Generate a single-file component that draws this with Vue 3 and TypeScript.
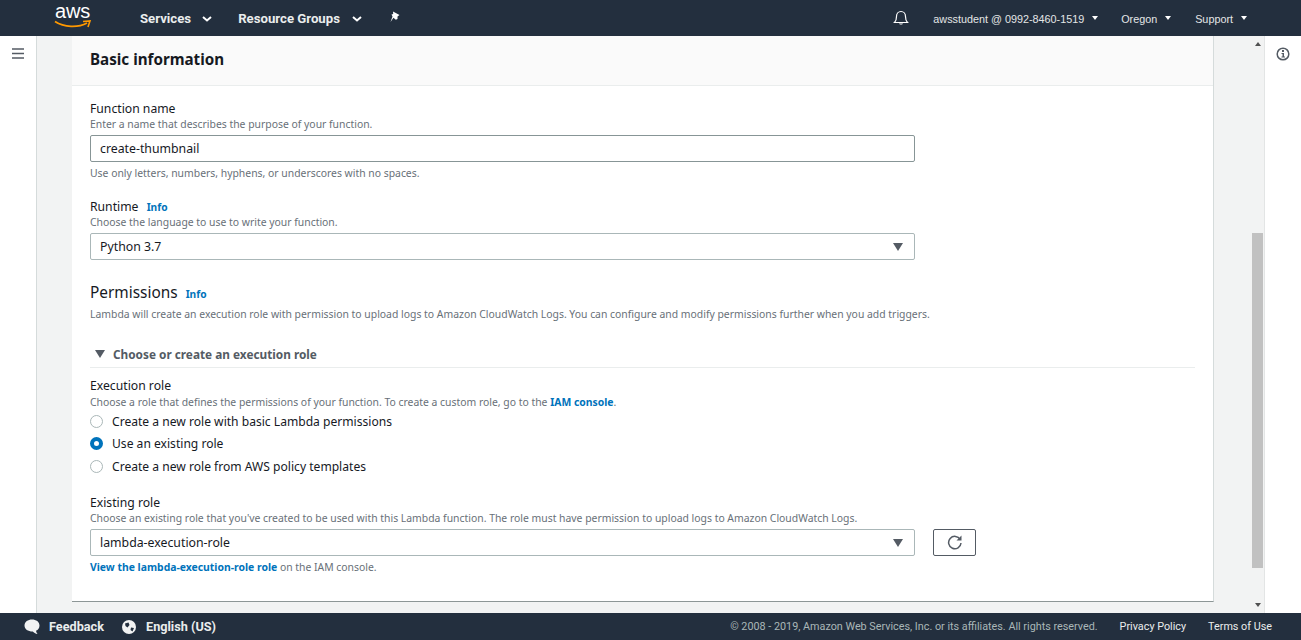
<script setup lang="ts">
const radios = [
  { label: 'Create a new role with basic Lambda permissions', on: false },
  { label: 'Use an existing role', on: true },
  { label: 'Create a new role from AWS policy templates', on: false },
]
</script>

<template>
  <div class="page">
    <header class="top">
      <div class="logo">
        <span class="aws">aws</span>
        <svg class="smile" width="38" height="9" viewBox="0 0 38 9"><path d="M1 1.500C10 7.500 24 8 33 3" fill="none" stroke="#f90" stroke-width="1.800"/><path d="M29 1.500L36 1L34 7" fill="none" stroke="#f90" stroke-width="1.600"/></svg>
      </div>
      <span class="nav n1">Services</span>
      <svg class="chev c1" width="10" height="6" viewBox="0 0 10 6"><path d="M1 1l4 3.500L9 1" fill="none" stroke="#fff" stroke-width="2"/></svg>
      <span class="nav n2">Resource Groups</span>
      <svg class="chev c2" width="10" height="6" viewBox="0 0 10 6"><path d="M1 1l4 3.500L9 1" fill="none" stroke="#fff" stroke-width="2"/></svg>
      <svg class="pin" width="12" height="12" viewBox="0 0 12 12"><path d="M4 .5L10.500 4 8.500 5.500 8.500 8 6.800 8.800 4.500 6.800 1.500 11 3.500 5.500 2.500 3.500 4.200 3Z" fill="#fff"/></svg>
      <div class="spacer"></div>
      <svg class="bell" width="16" height="16" viewBox="0 0 16 16"><path d="M1.500 12.500C3.200 11 3.500 9.500 3.500 6.500 3.500 3.500 5.500 1.500 8 1.500s4.500 2 4.500 5c0 3 .3 4.500 2 6Z" fill="none" stroke="#fff" stroke-width="1.200"/><path d="M6 13.500c.3 1.300 3.700 1.300 4 0Z" fill="#fff"/></svg>
      <span class="rt r1">awsstudent @ 0992-8460-1519</span><i class="tri"></i>
      <span class="rt r2">Oregon</span><i class="tri"></i>
      <span class="rt r3">Support</span><i class="tri"></i>
    </header>

    <div class="middle">
      <aside class="left">
        <svg width="12" height="11" viewBox="0 0 12 11"><path d="M0 1h12M0 5.500h12M0 10h12" stroke="#545b64" stroke-width="1.400"/></svg>
      </aside>

      <main class="main">
        <section class="card">
          <div class="card-head"><h2>Basic information</h2></div>
          <div class="card-body">
            <div class="label">Function name</div>
            <div class="hint">Enter a name that describes the purpose of your function.</div>
            <div class="input active">create-thumbnail</div>
            <div class="hint after">Use only letters, numbers, hyphens, or underscores with no spaces.</div>

            <div class="label runtime">Runtime <a class="info">Info</a></div>
            <div class="hint">Choose the language to use to write your function.</div>
            <div class="input select">Python 3.7<i class="sel-tri"></i></div>

            <h3 class="perm">Permissions <a class="info">Info</a></h3>
            <div class="hint perm-text">Lambda will create an execution role with permission to upload logs to Amazon CloudWatch Logs. You can configure and modify permissions further when you add triggers.</div>

            <div class="expander"><i class="exp-tri"></i>Choose or create an execution role</div>

            <div class="label exec">Execution role</div>
            <div class="hint">Choose a role that defines the permissions of your function. To create a custom role, go to the <a class="info link">IAM console</a>.</div>
            <div class="radios">
              <div v-for="r in radios" :key="r.label" class="radio-row">
                <span class="radio" :class="{ on: r.on }"></span>{{ r.label }}
              </div>
            </div>

            <div class="label existing">Existing role</div>
            <div class="hint">Choose an existing role that you've created to be used with this Lambda function. The role must have permission to upload logs to Amazon CloudWatch Logs.</div>
            <div class="role-row">
              <div class="input select">lambda-execution-role<i class="sel-tri"></i></div>
              <button class="refresh">
                <svg width="16" height="16" viewBox="0 0 16 16"><path d="M13.200 5.500A6.200 6.200 0 1 0 14 9" fill="none" stroke="#545b64" stroke-width="1.500"/><path d="M14.500 1.500v5h-5Z" fill="#545b64"/></svg>
              </button>
            </div>
            <div class="hint view"><a class="info link">View the lambda-execution-role role</a> on the IAM console.</div>
          </div>
        </section>
      </main>

      <div class="scroll">
        <i class="up"></i>
        <div class="track"><div class="thumb"></div></div>
        <i class="down"></i>
      </div>

      <aside class="right">
        <svg width="14" height="14" viewBox="0 0 14 14"><circle cx="7" cy="7" r="5.800" fill="none" stroke="#545b64" stroke-width="1.500"/><rect x="6" y="3" width="2" height="2" fill="#545b64"/><path d="M5.500 6H8v3.500h1v1H5.500v-1h1V7h-1Z" fill="#545b64"/></svg>
      </aside>
    </div>

    <footer class="foot">
      <svg class="fb" width="16" height="16" viewBox="0 0 16 16"><path d="M8 .5c4 0 7.500 2.300 7.500 6 0 2.500-1.300 4.500-3.500 5.300.2 1.200.7 2.200 1.500 3.200-2-.3-3.700-1.300-4.800-2.500C4 12.500.5 10.200.5 6.500.5 2.800 4 .5 8 .5Z" fill="#f2f3f3"/></svg>
      <span class="f-item feedback">Feedback</span>
      <svg class="globe" width="14" height="14" viewBox="0 0 14 14"><circle cx="7" cy="7" r="7" fill="#f2f3f3"/><path d="M3 3.500 6.500 2.500 7.500 5 5.500 7.500 3.500 6ZM9 7.500l3 .5-1.500 3.500L8.500 10Z" fill="#232f3e"/></svg>
      <span class="f-item english">English (US)</span>
      <div class="spacer"></div>
      <span class="copy">© 2008 - 2019, Amazon Web Services, Inc. or its affiliates. All rights reserved.</span>
      <span class="f-link">Privacy Policy</span>
      <span class="f-link">Terms of Use</span>
    </footer>
  </div>
</template>

<style>
html, body { margin: 0; padding: 0; overflow: hidden; }
</style>

<style scoped>
.page { width: 1301px; height: 640px; display: flex; flex-direction: column; font-family: "Noto Sans", "Open Sans", sans-serif; color: #16191f; overflow: hidden; background: #fff; }
.top { height: 36px; flex: none; background: #232f3e; display: flex; align-items: center; color: #fff; }
.spacer { flex: 1; }
.logo { width: 38px; margin-left: 54px; position: relative; height: 36px; flex: none; }
.aws { position: absolute; left: 1px; top: -1px; font: 400 20px/24px "Liberation Sans", sans-serif; letter-spacing: -.2px; color: #fff; }
.smile { position: absolute; left: 0; top: 20px; }
.nav { font: 700 13.200px/18px Roboto, sans-serif; color: #eaeded; margin-top: 1px; }
.n1 { margin-left: 48px; }
.c1 { margin-left: 11px; margin-top: 1px; }
.n2 { margin-left: 26px; }
.c2 { margin-left: 12px; margin-top: 1px; }
.pin { margin-left: 27px; margin-top: -2px; }
.bell { margin-right: 24px; }
.rt { font: 400 10.800px/14px "Liberation Sans", sans-serif; color: #e4e6e6; margin-top: 1px; }
.tri { width: 0; height: 0; border-left: 3.500px solid transparent; border-right: 3.500px solid transparent; border-top: 4px solid #fff; margin-left: 8px; }
.r2 { margin-left: 23px; }
.r3 { margin-left: 24px; }
.tri:last-child { margin-right: 54px; }

.middle { height: 577px; flex: none; display: flex; }
.left { width: 36px; flex: none; background: #fff; border-right: 1px solid #d5dbdb; box-sizing: content-box; padding-top: 12px; height: 565px; display: flex; justify-content: center; align-items: flex-start; }
.main { width: 1214px; flex: none; background: #f2f3f3; padding: 0 37px 0 35px; box-sizing: border-box; overflow: hidden; }
.card { width: 1142px; height: 566px; background: #fff; border-bottom: 1px solid #8d9696; border-right: 1px solid #d5dbdb; box-sizing: border-box; }
.card-head { height: 50px; box-sizing: border-box; background: #fafafa; border-bottom: 1px solid #eaeded; padding: 13px 18px 0; }
h2 { margin: 0; font-size: 15.200px; line-height: 20px; font-weight: 700; color: #16191f; }
.card-body { padding: 14px 18px 0; }
.label { font-size: 12.200px; line-height: 17px; color: #16191f; }
.hint { font-size: 10.400px; line-height: 15px; color: #687078; }
.input { width: 825px; height: 27px; margin-top: 3px; box-sizing: border-box; border: 1px solid #aab7b8; border-radius: 2px; font-size: 12.300px; line-height: 25px; padding-left: 9px; position: relative; background: #fff; flex: none; }
.input.active { border-color: #879596; }
.after { margin-top: 4px; }
.runtime { margin-top: 17px; height: 17px; }
.info { font-size: 10.200px; font-weight: 700; color: #0073bb; margin-left: 5px; }
.info.link { margin-left: 0; font-size: 10.400px; }
.sel-tri { position: absolute; right: 11px; top: 9px; width: 0; height: 0; border-left: 5px solid transparent; border-right: 5px solid transparent; border-top: 8px solid #545b64; }
.perm { margin: 22px 0 0; font-size: 15.400px; line-height: 22px; font-weight: 400; color: #16191f; }
.perm .info { margin-left: 4px; }
.perm-text { margin-top: 2px; }
.expander { margin-top: 23px; height: 22px; border-bottom: 1px solid #eaeded; font-size: 11.800px; line-height: 18px; font-weight: 700; color: #545b64; display: flex; align-items: flex-start; padding-left: 5px; }
.exp-tri { width: 0; height: 0; border-left: 5px solid transparent; border-right: 5px solid transparent; border-top: 8px solid #545b64; margin: 5px 8px 0 0; }
.exec { margin-top: 9px; height: 18px; }
.radios { margin-top: 0; }
.radio-row { height: 22.500px; display: flex; align-items: center; font-size: 12.100px; color: #16191f; }
.radio { width: 13px; height: 13px; border: 1px solid #aab7b8; border-radius: 50%; box-sizing: border-box; margin-right: 9px; background: #fff; }
.radio.on { border: 4px solid #0073bb; }
.existing { margin-top: 16px; }
.role-row { display: flex; align-items: flex-start; }
.refresh { width: 43px; height: 27px; margin: 3px 0 0 18px; padding: 0; border: 1px solid #545b64; border-radius: 2px; background: #fff; display: flex; align-items: center; justify-content: center; }
.view { margin-top: 4px; }

.scroll { width: 14px; flex: none; background: #f2f3f3; display: flex; flex-direction: column; align-items: center; border-right: 1px solid #e3e5e5; box-sizing: border-box; }
.up, .down { width: 0; height: 0; border-left: 3.500px solid transparent; border-right: 3.500px solid transparent; flex: none; }
.up { border-bottom: 4px solid #505050; margin-top: 6px; }
.down { border-top: 4px solid #505050; margin-bottom: 6px; }
.track { flex: 1; width: 11px; padding-top: 187px; box-sizing: border-box; }
.thumb { height: 335px; background: #c1c1c1; }
.right { width: 36px; flex: none; background: #fff; display: flex; justify-content: center; padding-top: 11px; box-sizing: border-box; }

.foot { height: 27px; flex: none; background: #232f3e; display: flex; align-items: center; color: #eaeded; }
.fb { margin-left: 24px; }
.f-item { font: 700 12.700px/18px Roboto, sans-serif; color: #eaeded; margin-left: 9px; }
.feedback { margin-right: 18px; }
.english { margin-left: 10px; }
.copy { font: 400 10.800px/14px Roboto, sans-serif; color: #aab7b8; }
.f-link { font: 400 10.800px/14px Roboto, sans-serif; color: #eaeded; margin-left: 22px; }
.f-link:last-child { margin-right: 29px; }
</style>
